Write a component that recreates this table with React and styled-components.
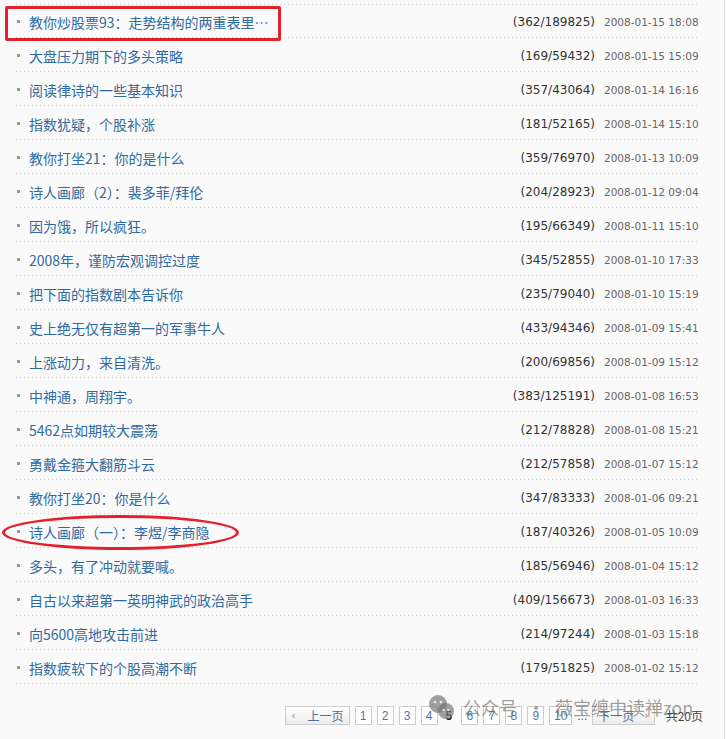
import React from 'react'
import styled, { createGlobalStyle } from 'styled-components'

const Global = createGlobalStyle`
  html, body { margin: 0; padding: 0; background: #fafafa; }
  body { font-family: "Liberation Sans", "Noto Sans CJK SC", sans-serif; }
`

const posts = [
  ['教你炒股票93：走势结构的两重表里…', '362/189825', '2008-01-15 18:08'],
  ['大盘压力期下的多头策略', '169/59432', '2008-01-15 15:09'],
  ['阅读律诗的一些基本知识', '357/43064', '2008-01-14 16:16'],
  ['指数犹疑，个股补涨', '181/52165', '2008-01-14 15:10'],
  ['教你打坐21：你的是什么', '359/76970', '2008-01-13 10:09'],
  ['诗人画廊（2）：裴多菲/拜伦', '204/28923', '2008-01-12 09:04'],
  ['因为饿，所以疯狂。', '195/66349', '2008-01-11 15:10'],
  ['2008年，谨防宏观调控过度', '345/52855', '2008-01-10 17:33'],
  ['把下面的指数剧本告诉你', '235/79040', '2008-01-10 15:19'],
  ['史上绝无仅有超第一的军事牛人', '433/94346', '2008-01-09 15:41'],
  ['上涨动力，来自清洗。', '200/69856', '2008-01-09 15:12'],
  ['中神通，周翔宇。', '383/125191', '2008-01-08 16:53'],
  ['5462点如期较大震荡', '212/78828', '2008-01-08 15:21'],
  ['勇戴金箍大翻筋斗云', '212/57858', '2008-01-07 15:12'],
  ['教你打坐20：你是什么', '347/83333', '2008-01-06 09:21'],
  ['诗人画廊（一）：李煜/李商隐', '187/40326', '2008-01-05 10:09'],
  ['多头，有了冲动就要喊。', '185/56946', '2008-01-04 15:12'],
  ['自古以来超第一英明神武的政治高手', '409/156673', '2008-01-03 16:33'],
  ['向5600高地攻击前进', '214/97244', '2008-01-03 15:18'],
  ['指数疲软下的个股高潮不断', '179/51825', '2008-01-02 15:12'],
]

const Page = styled.div`
  position: relative;
  width: 725px;
  min-height: 739px;
  border-right: 1px solid #e2e2e2;
  padding: 4px 24px 0 16px;
  box-sizing: border-box;
`

const dots = `
  background-image: linear-gradient(to right, #cfcfcf 1px, transparent 1px);
  background-size: 4px 1px;
  background-repeat: repeat-x;
`

const List = styled.ul`
  list-style: none;
  margin: 0;
  padding: 0;
  ${dots}
  background-position: left top;
`

const Row = styled.li`
  display: flex;
  align-items: center;
  height: 34px;
  padding-top: 1px;
  box-sizing: border-box;
  ${dots}
  background-position: left bottom;
`

const Bullet = styled.span`
  width: 3px;
  height: 3px;
  background: #999;
  margin: 0 9px 0 1px;
  flex: none;
`

const Title = styled.a`
  flex: 1;
  font-family: "Noto Sans CJK SC", "DejaVu Sans", sans-serif;
  font-size: 14px;
  color: #2f6aa0;
  text-decoration: none;
  white-space: nowrap;
`

const Count = styled.span`
  font-family: "DejaVu Sans", sans-serif;
  font-size: 12px;
  color: #333;
`

const Date = styled.span`
  font-family: "DejaVu Sans", sans-serif;
  font-size: 10.5px;
  color: #666;
  width: 96px;
  margin-left: 9px;
  text-align: left;
  white-space: nowrap;
`

const Pager = styled.div`
  display: flex;
  align-items: center;
  justify-content: flex-end;
  gap: 5px;
  margin-top: 22px;
  padding-right: 0;
  font-family: "Liberation Sans", "Noto Sans CJK SC", sans-serif;
  font-size: 12px;
`

const PageBox = styled.a`
  display: inline-flex;
  align-items: center;
  justify-content: center;
  height: 17px;
  min-width: ${p => (p.wide ? '19px' : '13px')};
  padding: 0 1px;
  border: 1px solid #cdcdcd;
  background: #fff;
  color: #4a78b0;
  text-decoration: none;
`

const Current = styled.b`
  color: #222;
  padding: 0 4px 0 3px;
`

const NavBtn = styled.a`
  display: inline-flex;
  align-items: center;
  gap: ${p => p.gap};
  height: 17px;
  padding: 0 5px;
  border: 1px solid #cdcdcd;
  background: linear-gradient(#ffffff, #ececec);
  color: #4a6f9e;
  font-family: "Noto Sans CJK SC", sans-serif;
  font-size: 12px;
  text-decoration: none;
`

const Arrow = styled.span`
  color: #888;
  font-family: "DejaVu Sans", sans-serif;
  font-size: 11px;
`

const Total = styled.span`
  font-family: "Noto Sans CJK SC", sans-serif;
  color: #444;
  margin-left: 6px;
  margin-right: -3px;
`

const Ellipsis = styled.span`
  color: #555;
`

const RedBox = styled.div`
  position: absolute;
  left: 5px;
  top: 6px;
  width: 270px;
  height: 29px;
  border: 3px solid #e3202b;
  border-radius: 2px;
  pointer-events: none;
`

const RedOval = styled.div`
  position: absolute;
  left: 2px;
  top: 515px;
  width: 231px;
  height: 29px;
  border: 3px solid #e3202b;
  border-radius: 50%;
  pointer-events: none;
`

const Watermark = styled.div`
  position: absolute;
  left: 428px;
  top: 694px;
  display: flex;
  align-items: center;
  font-family: "Noto Sans CJK SC", sans-serif;
  font-size: 18px;
  color: rgba(95, 95, 95, 0.6);
  white-space: nowrap;
  pointer-events: none;
`

const Mark = styled.span`
  margin-left: ${p => p.ml || '0'};
`

const WeChat = () => (
  <svg width="28" height="26" viewBox="0 0 28 26">
    <circle cx="10" cy="10" r="9" fill="rgba(110,110,110,0.65)" />
    <circle cx="18" cy="17" r="8" fill="rgba(120,120,120,0.7)" />
    <circle cx="7" cy="8" r="1.3" fill="#eee" />
    <circle cx="13" cy="8" r="1.3" fill="#eee" />
    <circle cx="15.5" cy="16" r="1.1" fill="#eee" />
    <circle cx="20.5" cy="16" r="1.1" fill="#eee" />
  </svg>
)

export default function App() {
  return (
    <Page>
      <Global />
      <List>
        {posts.map(([t, c, d]) => (
          <Row key={d + t}>
            <Bullet />
            <Title href="#">{t}</Title>
            <Count>({c})</Count>
            <Date>{d}</Date>
          </Row>
        ))}
      </List>
      <Pager>
        <NavBtn gap="12px"><Arrow>‹</Arrow>上一页</NavBtn>
        {[1, 2, 3, 4].map(n => <PageBox key={n}>{n}</PageBox>)}
        <Current>5</Current>
        {[6, 7, 8, 9].map(n => <PageBox key={n}>{n}</PageBox>)}
        <PageBox wide>10</PageBox>
        <Ellipsis>...</Ellipsis>
        <NavBtn gap="10px">下一页<Arrow>›</Arrow></NavBtn>
        <Total>共20页</Total>
      </Pager>
      <RedBox />
      <RedOval />
      <Watermark>
        <WeChat />
        <Mark ml="7px">公众号</Mark>
        <Mark ml="10px">·</Mark>
        <Mark ml="10px">薇宝缠中读禅zon</Mark>
      </Watermark>
    </Page>
  )
}
